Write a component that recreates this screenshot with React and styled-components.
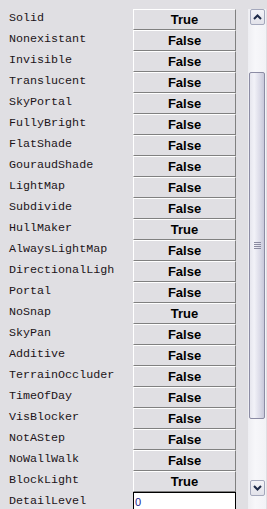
import React from "react";
import styled, { createGlobalStyle } from "styled-components";

const flags = [
  ["Solid", "True"],
  ["Nonexistant", "False"],
  ["Invisible", "False"],
  ["Translucent", "False"],
  ["SkyPortal", "False"],
  ["FullyBright", "False"],
  ["FlatShade", "False"],
  ["GouraudShade", "False"],
  ["LightMap", "False"],
  ["Subdivide", "False"],
  ["HullMaker", "True"],
  ["AlwaysLightMap", "False"],
  ["DirectionalLigh", "False"],
  ["Portal", "False"],
  ["NoSnap", "True"],
  ["SkyPan", "False"],
  ["Additive", "False"],
  ["TerrainOccluder", "False"],
  ["TimeOfDay", "False"],
  ["VisBlocker", "False"],
  ["NotAStep", "False"],
  ["NoWallWalk", "False"],
  ["BlockLight", "True"],
];

const GlobalStyle = createGlobalStyle`
  html, body {
    margin: 0;
    padding: 0;
    background: #e0dfe3;
    overflow: hidden;
  }
`;

const Panel = styled.div`
  display: flex;
  align-items: flex-start;
  padding-top: 9px;
  height: 500px;
  overflow: hidden;
`;

const List = styled.div`
  display: grid;
  grid-template-columns: 133px 103px;
  grid-auto-rows: 21px;
  width: 236px;
`;

const Label = styled.div`
  padding-left: 9px;
  font-family: "Liberation Mono", "Courier New", monospace;
  font-size: 11.7px;
  line-height: 19px;
  color: #201418;
  white-space: nowrap;
  overflow: hidden;
`;

const Toggle = styled.button`
  box-sizing: border-box;
  height: 21px;
  margin: 0;
  padding: 0;
  background: #e0dfe3;
  border: 1px solid;
  border-color: #ffffff #808080 #808080 #ffffff;
  font-family: "Liberation Sans", Arial, sans-serif;
  font-weight: bold;
  font-size: 13px;
  line-height: 19px;
  color: #000;
  text-align: center;
`;

const Field = styled.div`
  box-sizing: border-box;
  height: 21px;
  background: #fff;
  border: 1px solid #000;
  padding: 3px 0 0 1px;
  font-family: "Liberation Sans", Arial, sans-serif;
  font-size: 11px;
  color: #1a1a8a;
`;

const Scrollbar = styled.div`
  margin-left: 12px;
  width: 18px;
  height: 500px;
  display: flex;
  flex-direction: column;
  align-items: center;
  padding-bottom: 13px;
  box-sizing: border-box;
  background: linear-gradient(to right, #eeeef2, #f7f7fa 40%, #f2f2f6);
`;

const ArrowButton = styled.div`
  box-sizing: border-box;
  width: 15px;
  height: 16px;
  margin-left: 1px;
  border: 1px solid #a4a8bc;
  border-radius: 2px;
  background: linear-gradient(to bottom, #f4f4f8, #e2e2ea);
  display: flex;
  align-items: center;
  justify-content: center;
`;

const Track = styled.div`
  flex: 1;
  width: 100%;
  display: flex;
  flex-direction: column;
  padding-top: 47px;
  box-sizing: border-box;
`;

const Thumb = styled.div`
  box-sizing: border-box;
  width: 16px;
  height: 347px;
  margin-left: 1px;
  border: 1px solid #8c8ca4;
  border-radius: 2px;
  background: linear-gradient(to right, #e6e6ee, #f2f2f8 30%, #d8d8e6 75%, #c8c8da);
  display: flex;
  align-items: center;
  justify-content: center;
`;

const Grip = styled.div`
  width: 7px;
  height: 7px;
  background: repeating-linear-gradient(
    to bottom,
    #8a8aa0 0,
    #8a8aa0 1px,
    transparent 1px,
    transparent 2px
  );
`;

const Chevron = ({ up }) => (
  <svg width="9" height="6" viewBox="0 0 9 6">
    <path
      d={up ? "M1 5 L4.5 1.5 L8 5" : "M1 1 L4.5 4.5 L8 1"}
      fill="none"
      stroke="#1e2a48"
      strokeWidth="2"
    />
  </svg>
);

export default function App() {
  return (
    <>
      <GlobalStyle />
      <Panel>
        <List>
          {flags.map(([name, value]) => (
            <React.Fragment key={name}>
              <Label>{name}</Label>
              <Toggle>{value}</Toggle>
            </React.Fragment>
          ))}
          <Label>DetailLevel</Label>
          <Field>0</Field>
        </List>
        <Scrollbar>
          <ArrowButton>
            <Chevron up />
          </ArrowButton>
          <Track>
            <Thumb>
              <Grip />
            </Thumb>
          </Track>
          <ArrowButton>
            <Chevron />
          </ArrowButton>
        </Scrollbar>
      </Panel>
    </>
  );
}
